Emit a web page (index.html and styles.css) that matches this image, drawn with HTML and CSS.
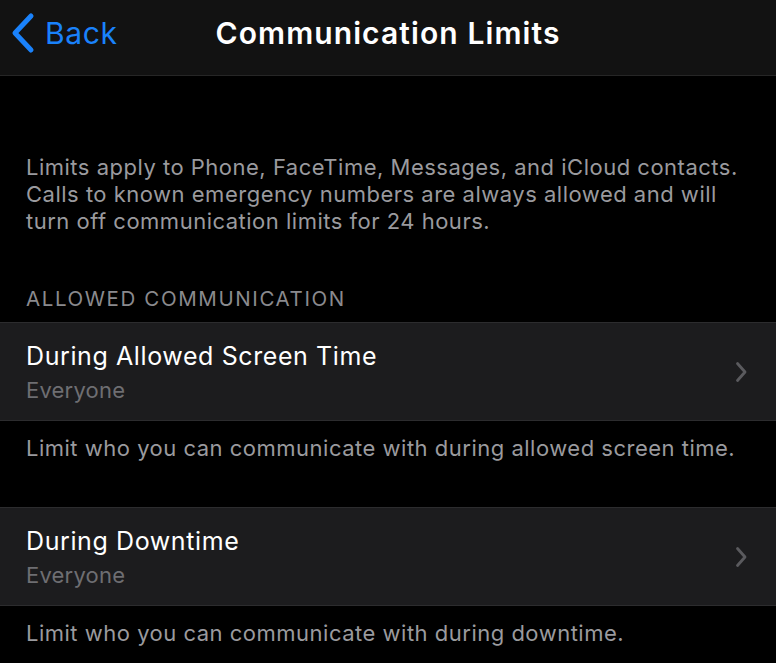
FILE: index.html
```html
<!DOCTYPE html>
<html lang="en">
<head>
<meta charset="utf-8">
<title>Communication Limits</title>
<link rel="stylesheet" href="styles.css">
</head>
<body>
<header class="navbar">
  <a class="back">
    <svg class="back-chevron" width="26" height="42" viewBox="0 0 26 42"><path d="M21 4 L5 21 L21 38" fill="none" stroke="#1a82fb" stroke-width="5" stroke-linecap="round" stroke-linejoin="round"/></svg>
    <span class="back-label">Back</span>
  </a>
  <h1 class="nav-title">Communication Limits</h1>
</header>
<main class="content">
  <p class="intro">Limits apply to Phone, FaceTime, Messages, and iCloud contacts. Calls to known emergency numbers are always allowed and will turn off communication limits for 24 hours.</p>
  <div class="section-header">ALLOWED COMMUNICATION</div>
  <div class="cell">
    <div class="cell-text">
      <div class="cell-title">During Allowed Screen Time</div>
      <div class="cell-sub">Everyone</div>
    </div>
    <svg class="chevron" width="13" height="22" viewBox="0 0 13 22"><path d="M2.5 2.5 L10 11 L2.5 19.5" fill="none" stroke="#5a5a5e" stroke-width="2.8" stroke-linecap="round" stroke-linejoin="round"/></svg>
  </div>
  <p class="footer">Limit who you can communicate with during allowed screen time.</p>
  <div class="cell">
    <div class="cell-text">
      <div class="cell-title">During Downtime</div>
      <div class="cell-sub">Everyone</div>
    </div>
    <svg class="chevron" width="13" height="22" viewBox="0 0 13 22"><path d="M2.5 2.5 L10 11 L2.5 19.5" fill="none" stroke="#5a5a5e" stroke-width="2.8" stroke-linecap="round" stroke-linejoin="round"/></svg>
  </div>
  <p class="footer">Limit who you can communicate with during downtime.</p>
</main>
</body>
</html>
```
FILE: styles.css
```css
* { box-sizing: border-box; }
html, body {
  margin: 0;
  padding: 0;
  background: #000;
  font-family: Inter, "Noto Sans", "Liberation Sans", sans-serif;
  color: #fff;
  overflow: hidden;
}
.navbar {
  position: relative;
  height: 76px;
  background: #121212;
  border-bottom: 1px solid #262626;
  display: flex;
  align-items: center;
  justify-content: center;
}
.back {
  position: absolute;
  left: 10px;
  top: 12px;
  display: flex;
  align-items: center;
  gap: 9px;
  color: #1a82fb;
}
.back-label {
  font-size: 30px;
  line-height: 42px;
  letter-spacing: 0.6px;
}
.nav-title {
  margin: 0 0 10px;
  font-size: 30px;
  font-weight: 600;
  letter-spacing: 1.1px;
}
.content {
  padding-top: 78px;
}
.intro {
  margin: 0;
  padding: 0 26px;
  font-size: 22px;
  line-height: 27px;
  letter-spacing: 0.5px;
  color: #9a9a9e;
}
.section-header {
  padding: 52px 26px 11px;
  font-size: 20.5px;
  line-height: 24px;
  letter-spacing: 1.6px;
  color: #8a8a8e;
}
.cell {
  height: 99px;
  background: #1c1c1e;
  border-top: 1px solid #2c2c2e;
  border-bottom: 1px solid #2c2c2e;
  display: flex;
  align-items: center;
  padding: 0 28px 0 26px;
}
.cell-text { flex: 1; }
.cell-title {
  font-size: 25px;
  line-height: 30px;
  letter-spacing: 0.6px;
  color: #fff;
}
.cell-sub {
  margin-top: 6px;
  font-size: 22px;
  line-height: 26px;
  letter-spacing: 0.2px;
  color: #6e6e72;
}
.chevron { display: block; }
.footer {
  margin: 0;
  padding: 14px 26px 45px;
  font-size: 22px;
  line-height: 27px;
  letter-spacing: 0.5px;
  color: #9a9a9e;
}
```
